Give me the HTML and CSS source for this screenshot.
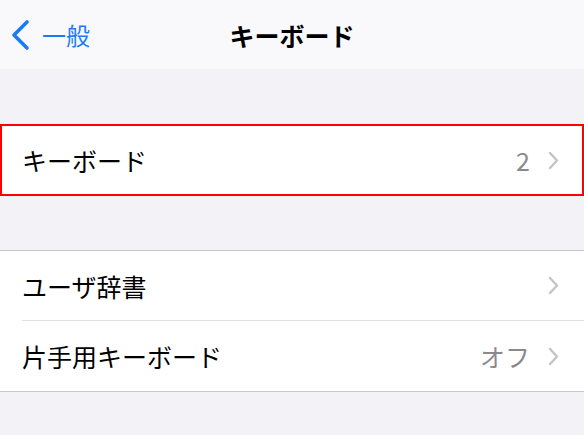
FILE: index.html
```html
<!DOCTYPE html>
<html>
<head>
    <meta charset="utf-8">
    <title>キーボード</title>
    <link rel="stylesheet" href="styles.css">
</head>
<body>
    <div class="navbar">
        <div class="back">
            <svg class="back-icon" width="21" height="32" viewBox="0 0 21 32">
                <polyline points="17,3 4,16 17,29" fill="none" stroke="#1a7cf5" stroke-width="3.6" stroke-linecap="round" stroke-linejoin="round"/>
            </svg>
            <span>一般</span>
        </div>
        <h1 class="title">キーボード</h1>
        <div></div>
    </div>

    <div class="group highlight">
        <div class="row">
            <span class="label">キーボード</span>
            <span class="value">2</span>
            <svg class="chevron" width="11" height="19" viewBox="0 0 11 19">
                <polyline points="2,2 9,9.5 2,17" fill="none" stroke="#c4c4c7" stroke-width="2.4" stroke-linecap="round" stroke-linejoin="round"/>
            </svg>
        </div>
    </div>

    <div class="group">
        <div class="row">
            <span class="label">ユーザ辞書</span>
            <svg class="chevron" width="11" height="19" viewBox="0 0 11 19">
                <polyline points="2,2 9,9.5 2,17" fill="none" stroke="#c4c4c7" stroke-width="2.4" stroke-linecap="round" stroke-linejoin="round"/>
            </svg>
        </div>
        <div class="row">
            <span class="label">片手用キーボード</span>
            <span class="value">オフ</span>
            <svg class="chevron" width="11" height="19" viewBox="0 0 11 19">
                <polyline points="2,2 9,9.5 2,17" fill="none" stroke="#c4c4c7" stroke-width="2.4" stroke-linecap="round" stroke-linejoin="round"/>
            </svg>
        </div>
    </div>
</body>
</html>
```

FILE: styles.css
```css
body {
    margin: 0;
    background-color: #f2f2f7;
    font-family: "Noto Sans CJK JP", "Noto Sans", sans-serif;
    color: #000;
}
.navbar {
    height: 69px;
    background-color: #f9f9fb;
    display: grid;
    grid-template-columns: 1fr auto 1fr;
    align-items: center;
}
.back {
    display: flex;
    align-items: center;
    gap: 11px;
    padding-left: 10px;
    color: #1a7cf5;
    font-size: 24px;
}
.back-icon {
    display: block;
}
.title {
    margin: 0;
    font-size: 25px;
    font-weight: bold;
}
.group {
    background-color: #fff;
    margin-top: 54px;
    border-top: 1px solid #c8c7cc;
    border-bottom: 1px solid #c8c7cc;
}
.group.highlight {
    margin-top: 55px;
    border: 2px solid #ff0000;
}
.row {
    height: 69px;
    display: flex;
    align-items: center;
    margin-left: 22px;
    padding-right: 25px;
    font-size: 25px;
}
.highlight .row {
    height: 68px;
    margin-left: 20px;
    padding-right: 23px;
}
.row + .row {
    border-top: 1px solid #e0e0e3;
    height: 70px;
}
.label {
    flex: 1;
}
.value {
    color: #8a8a8e;
    margin-right: 18px;
}
.chevron {
    display: block;
}
```
